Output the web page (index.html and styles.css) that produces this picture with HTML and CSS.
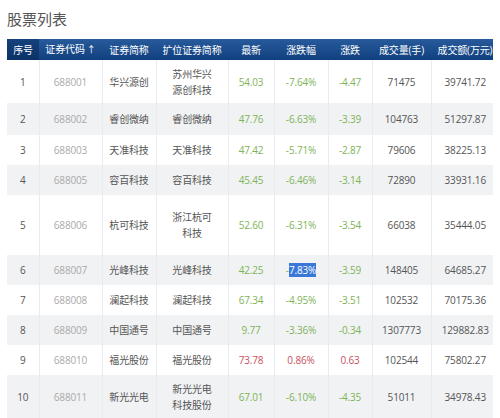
FILE: index.html
```html
<!DOCTYPE html>
<html lang="zh-CN">
<head>
  <meta charset="UTF-8" />
  <meta name="viewport" content="width=device-width, initial-scale=1.0"/>
  <title>股票列表</title>
  <link rel="stylesheet" href="styles.css">
</head>
<body>

  <div class="page">
    <h2 class="title">股票列表</h2>

    <!-- Table is wider than the panel, the rest is clipped -->
    <div class="table-wrap">
      <table class="stock-table">
        <colgroup>
          <col style="width:32px"><col style="width:63px"><col style="width:54px">
          <col style="width:72px"><col style="width:46px"><col style="width:54px">
          <col style="width:44px"><col style="width:59px"><col style="width:68px">
        </colgroup>
        <thead>
          <tr>
            <th class="active">序号</th>
            <th>证券代码<span class="arrow">↑</span></th>
            <th>证券简称</th>
            <th>扩位证券简称</th>
            <th>最新</th>
            <th>涨跌幅</th>
            <th>涨跌</th>
            <th>成交量(手)</th>
            <th>成交额(万元)</th>
          </tr>
        </thead>
        <tbody>
          <tr class="tall">
            <td>1</td><td class="code">688001</td><td>华兴源创</td><td class="wrap">苏州华兴源创科技</td>
            <td class="down">54.03</td><td class="down">-7.64%</td><td class="down">-4.47</td><td>71475</td><td>39741.72</td>
          </tr>
          <tr class="mid">
            <td>2</td><td class="code">688002</td><td>睿创微纳</td><td class="wrap">睿创微纳</td>
            <td class="down">47.76</td><td class="down">-6.63%</td><td class="down">-3.39</td><td>104763</td><td>51297.87</td>
          </tr>
          <tr>
            <td>3</td><td class="code">688003</td><td>天准科技</td><td class="wrap">天准科技</td>
            <td class="down">47.42</td><td class="down">-5.71%</td><td class="down">-2.87</td><td>79606</td><td>38225.13</td>
          </tr>
          <tr>
            <td>4</td><td class="code">688005</td><td>容百科技</td><td class="wrap">容百科技</td>
            <td class="down">45.45</td><td class="down">-6.46%</td><td class="down">-3.14</td><td>72890</td><td>33931.16</td>
          </tr>
          <tr class="xtall">
            <td>5</td><td class="code">688006</td><td>杭可科技</td><td class="wrap">浙江杭可科技</td>
            <td class="down">52.60</td><td class="down">-6.31%</td><td class="down">-3.54</td><td>66038</td><td>35444.05</td>
          </tr>
          <tr>
            <td>6</td><td class="code">688007</td><td>光峰科技</td><td class="wrap">光峰科技</td>
            <td class="down">42.25</td><td class="down">-<span class="sel">7.83%</span></td><td class="down">-3.59</td><td>148405</td><td>64685.27</td>
          </tr>
          <tr>
            <td>7</td><td class="code">688008</td><td>澜起科技</td><td class="wrap">澜起科技</td>
            <td class="down">67.34</td><td class="down">-4.95%</td><td class="down">-3.51</td><td>102532</td><td>70175.36</td>
          </tr>
          <tr>
            <td>8</td><td class="code">688009</td><td>中国通号</td><td class="wrap">中国通号</td>
            <td class="down">9.77</td><td class="down">-3.36%</td><td class="down">-0.34</td><td>1307773</td><td>129882.83</td>
          </tr>
          <tr>
            <td>9</td><td class="code">688010</td><td>福光股份</td><td class="wrap">福光股份</td>
            <td class="up">73.78</td><td class="up">0.86%</td><td class="up">0.63</td><td>102544</td><td>75802.27</td>
          </tr>
          <tr class="tall">
            <td>10</td><td class="code">688011</td><td>新光光电</td><td class="wrap">新光光电科技股份</td>
            <td class="down">67.01</td><td class="down">-6.10%</td><td class="down">-4.35</td><td>51011</td><td>34978.43</td>
          </tr>
        </tbody>
      </table>
    </div>
  </div>

</body>
</html>
```

FILE: styles.css
```css
* {
  box-sizing: border-box;
  margin: 0;
  padding: 0;
}

body {
  font-family: "Open Sans", "Noto Sans CJK SC", sans-serif;
  background: #fff;
  color: #444;
}

.page {
  padding: 9px 7px 0;
}

.title {
  font-size: 15px;
  line-height: 20px;
  font-weight: normal;
  color: #555;
  margin-bottom: 10px;
}

.table-wrap {
  width: 486px;
  overflow: hidden;
}

.stock-table {
  width: 492px;
  table-layout: fixed;
  border-collapse: collapse;
  font-size: 10px;
  line-height: 16px;
  letter-spacing: -0.15px;
  text-align: center;
}

.stock-table th {
  height: 21px;
  font-weight: normal;
  color: #fff;
  white-space: nowrap;
  background: linear-gradient(#285b9c, #103f7e);
  padding: 0 2px;
}

.stock-table th.active {
  background: linear-gradient(#15427d, #0a3266);
}

.stock-table .arrow {
  font-size: 9px;
  margin-left: 2px;
}

.stock-table td {
  height: 30px;
  padding: 0 2px;
  border-left: 1px solid #eaebed;
  color: #555;
}

.stock-table td:first-child {
  border-left: none;
}

.stock-table td.wrap {
  padding: 0 13px;
}

.stock-table tbody tr:nth-child(even) {
  background: #f1f2f4;
}

.stock-table tr.mid td {
  height: 32px;
}

.stock-table tr.tall td {
  height: 43px;
}

.stock-table tr.xtall td {
  height: 60px;
}

.stock-table td.code {
  color: #aaa;
}

.stock-table td.down {
  color: #7fb356;
}

.stock-table td.up {
  color: #c8505e;
}

.sel {
  background: #3a78d8;
  color: #fff;
}
```
